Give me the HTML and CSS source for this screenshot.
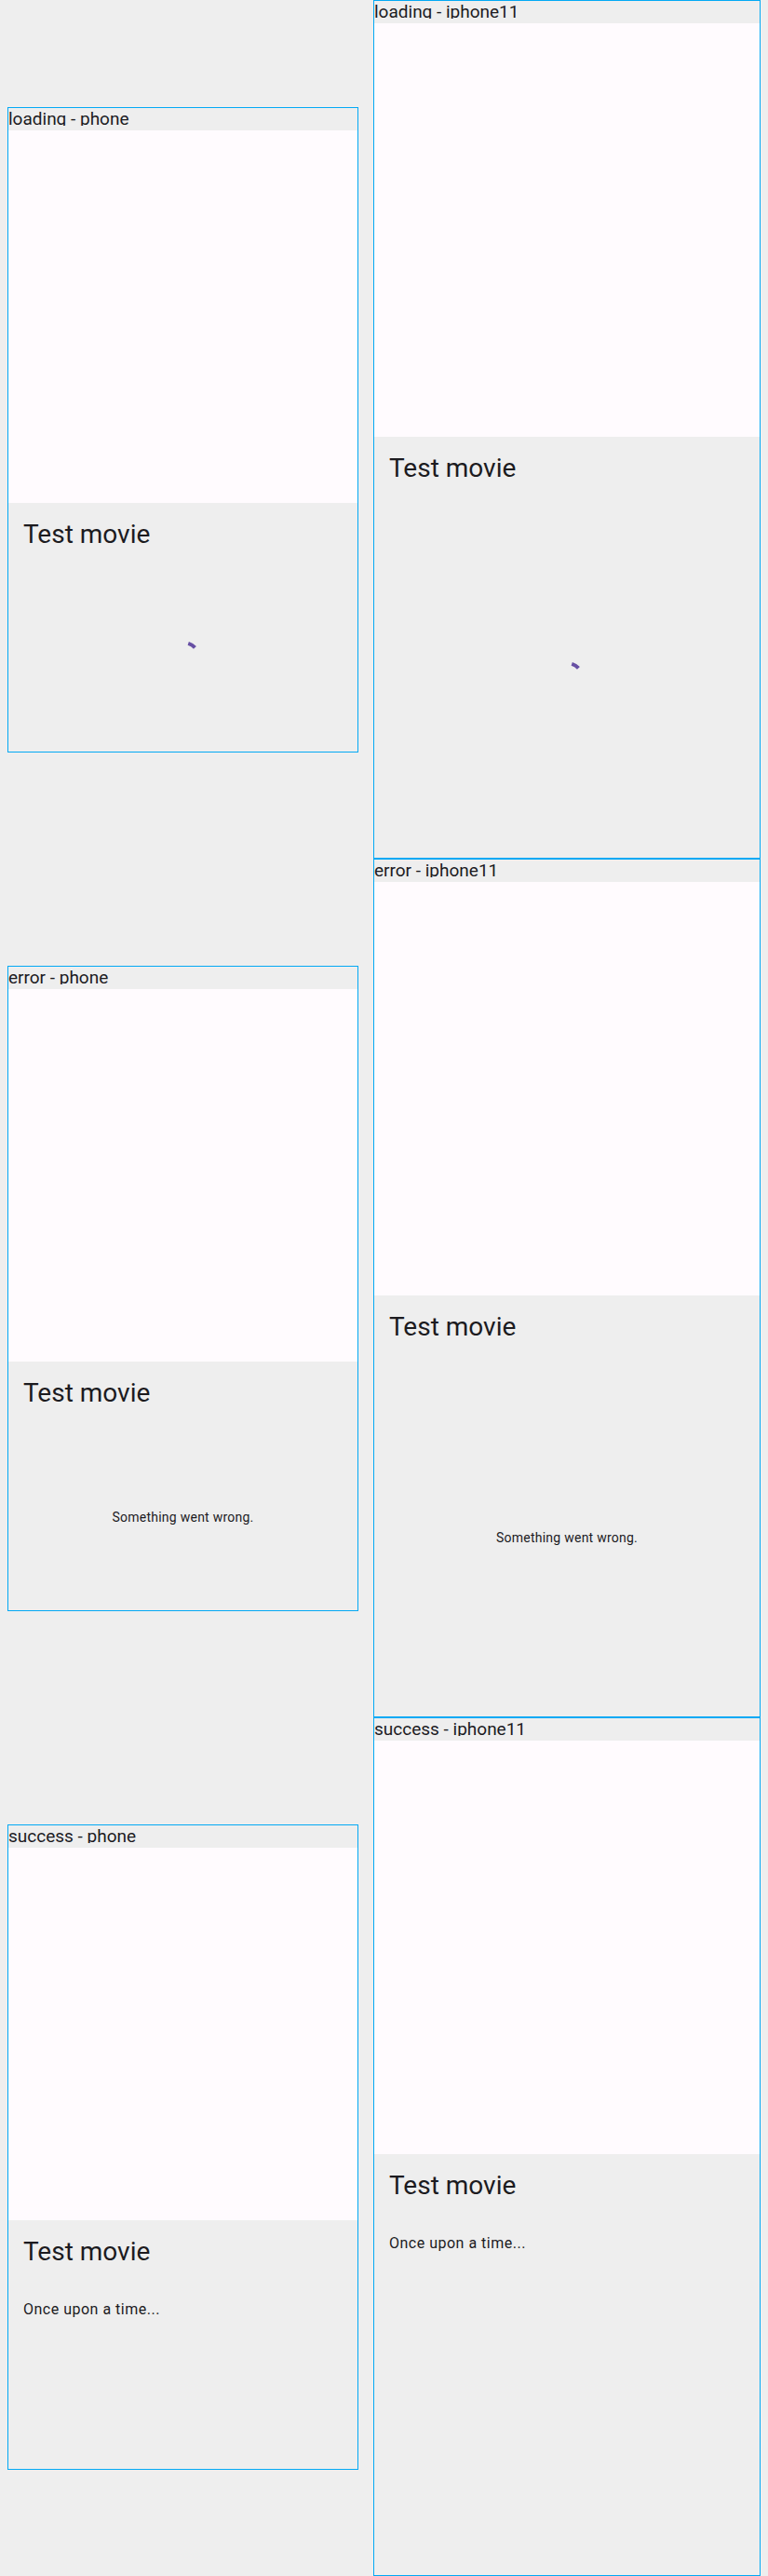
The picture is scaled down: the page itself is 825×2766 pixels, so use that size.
FILE: index.html
```html
<!DOCTYPE HTML>
<html lang="en">
  <head>
    <title>Movie details goldens</title>
    <meta charset="utf-8">
    <link rel="stylesheet" href="styles.css">
  </head>
  <body>

  <div id="devices">

    <div class="device phone">
      <div class="label"><span>loading - phone</span></div>
      <div class="screen">
        <div class="poster"></div>
        <h1 class="title">Test movie</h1>
        <div class="rest">
          <svg class="spinner" width="40" height="40" viewBox="-20 -20 40 40">
            <path d="M5.25 -16.17 A17 17 0 0 1 12.43 -11.59" />
          </svg>
        </div>
      </div>
    </div>

    <div class="device iphone11">
      <div class="label"><span>loading - iphone11</span></div>
      <div class="screen">
        <div class="poster"></div>
        <h1 class="title">Test movie</h1>
        <div class="rest">
          <svg class="spinner" width="40" height="40" viewBox="-20 -20 40 40">
            <path d="M5.25 -16.17 A17 17 0 0 1 12.43 -11.59" />
          </svg>
        </div>
      </div>
    </div>

    <div class="device phone">
      <div class="label"><span>error - phone</span></div>
      <div class="screen">
        <div class="poster"></div>
        <h1 class="title">Test movie</h1>
        <div class="rest">
          <span class="message">Something went wrong.</span>
        </div>
      </div>
    </div>

    <div class="device iphone11">
      <div class="label"><span>error - iphone11</span></div>
      <div class="screen">
        <div class="poster"></div>
        <h1 class="title">Test movie</h1>
        <div class="rest">
          <span class="message">Something went wrong.</span>
        </div>
      </div>
    </div>

    <div class="device phone">
      <div class="label"><span>success - phone</span></div>
      <div class="screen">
        <div class="poster"></div>
        <h1 class="title">Test movie</h1>
        <p class="overview">Once upon a time...</p>
      </div>
    </div>

    <div class="device iphone11">
      <div class="label"><span>success - iphone11</span></div>
      <div class="screen">
        <div class="poster"></div>
        <h1 class="title">Test movie</h1>
        <p class="overview">Once upon a time...</p>
      </div>
    </div>

  </div>

  </body>
</html>
```

FILE: styles.css
```css
html {
  height: 100%;
}
body {
  margin: 0;
  padding: 0;
  background: #eeeeee;
  color: #1c1b1f;
  font-family: Roboto, "Noto Sans", sans-serif;
}

#devices {
  display: grid;
  grid-template-columns: 377px 416px;
  column-gap: 16px;
  align-items: center;
  padding: 0 8px;
}

.device {
  border: 1px solid #03a9f4;
  background: #eeeeee;
}

.label {
  height: 24px;
  font-size: 19px;
  white-space: nowrap;
}
/* the label text is cut just under its baseline */
.label span {
  display: block;
  height: 19px;
  line-height: 23px;
  overflow: hidden;
}

.screen {
  display: flex;
  flex-direction: column;
  overflow: hidden;
}
.phone .screen {
  width: 375px;
  height: 667px;
}
.iphone11 .screen {
  width: 414px;
  height: 896px;
}

.poster {
  background: #fffbfe;
  flex: none;
}
.phone .poster {
  height: 400px;
}
.iphone11 .poster {
  height: 444px;
}

.title {
  margin: 0;
  padding: 16px;
  font-size: 28px;
  line-height: 36px;
  font-weight: 400;
}

.rest {
  flex: 1;
  display: flex;
  align-items: center;
  justify-content: center;
}

.spinner path {
  fill: none;
  stroke: #6750a4;
  stroke-width: 4;
}

.message {
  font-size: 14px;
  line-height: 20px;
  letter-spacing: 0.25px;
}

.overview {
  margin: 0;
  padding: 16px;
  font-size: 16px;
  line-height: 24px;
  letter-spacing: 0.5px;
}
```
